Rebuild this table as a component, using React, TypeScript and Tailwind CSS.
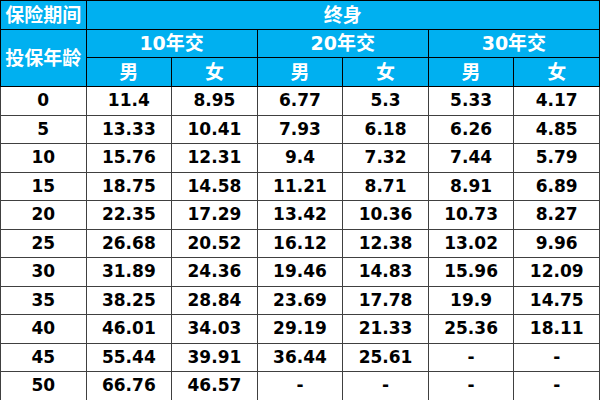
const rows: [string, string[]][] = [
  ['0', ['11.4', '8.95', '6.77', '5.3', '5.33', '4.17']],
  ['5', ['13.33', '10.41', '7.93', '6.18', '6.26', '4.85']],
  ['10', ['15.76', '12.31', '9.4', '7.32', '7.44', '5.79']],
  ['15', ['18.75', '14.58', '11.21', '8.71', '8.91', '6.89']],
  ['20', ['22.35', '17.29', '13.42', '10.36', '10.73', '8.27']],
  ['25', ['26.68', '20.52', '16.12', '12.38', '13.02', '9.96']],
  ['30', ['31.89', '24.36', '19.46', '14.83', '15.96', '12.09']],
  ['35', ['38.25', '28.84', '23.69', '17.78', '19.9', '14.75']],
  ['40', ['46.01', '34.03', '29.19', '21.33', '25.36', '18.11']],
  ['45', ['55.44', '39.91', '36.44', '25.61', '-', '-']],
  ['50', ['66.76', '46.57', '-', '-', '-', '-']],
];

const head = 'border border-black bg-[#00b0f0] text-white font-bold text-[19px] leading-none p-0';
const cell = 'border border-[#404040] text-black font-bold text-[17px] leading-none p-0';

export default function App() {
  return (
    <div className="w-[600px] h-[400px] bg-white overflow-hidden">
      <table
        className="w-[600px] h-[400px] table-fixed border-collapse text-center"
        style={{ fontFamily: '"DejaVu Sans", "Noto Sans CJK SC", sans-serif' }}
      >
        <tbody>
          <tr className="h-[29px]">
            <td className={head}>保险期间</td>
            <td className={head} colSpan={6}>终身</td>
          </tr>
          <tr className="h-[28px]">
            <td className={head} rowSpan={2}>投保年龄</td>
            <td className={head} colSpan={2}>10年交</td>
            <td className={head} colSpan={2}>20年交</td>
            <td className={head} colSpan={2}>30年交</td>
          </tr>
          <tr className="h-[29px]">
            {['男', '女', '男', '女', '男', '女'].map((g, i) => (
              <td key={i} className={head}>{g}</td>
            ))}
          </tr>
          {rows.map(([age, vals]) => (
            <tr key={age} className="h-[28.5px]">
              <td className={cell}>{age}</td>
              {vals.map((v, i) => (
                <td key={i} className={cell}>{v}</td>
              ))}
            </tr>
          ))}
        </tbody>
      </table>
    </div>
  );
}
